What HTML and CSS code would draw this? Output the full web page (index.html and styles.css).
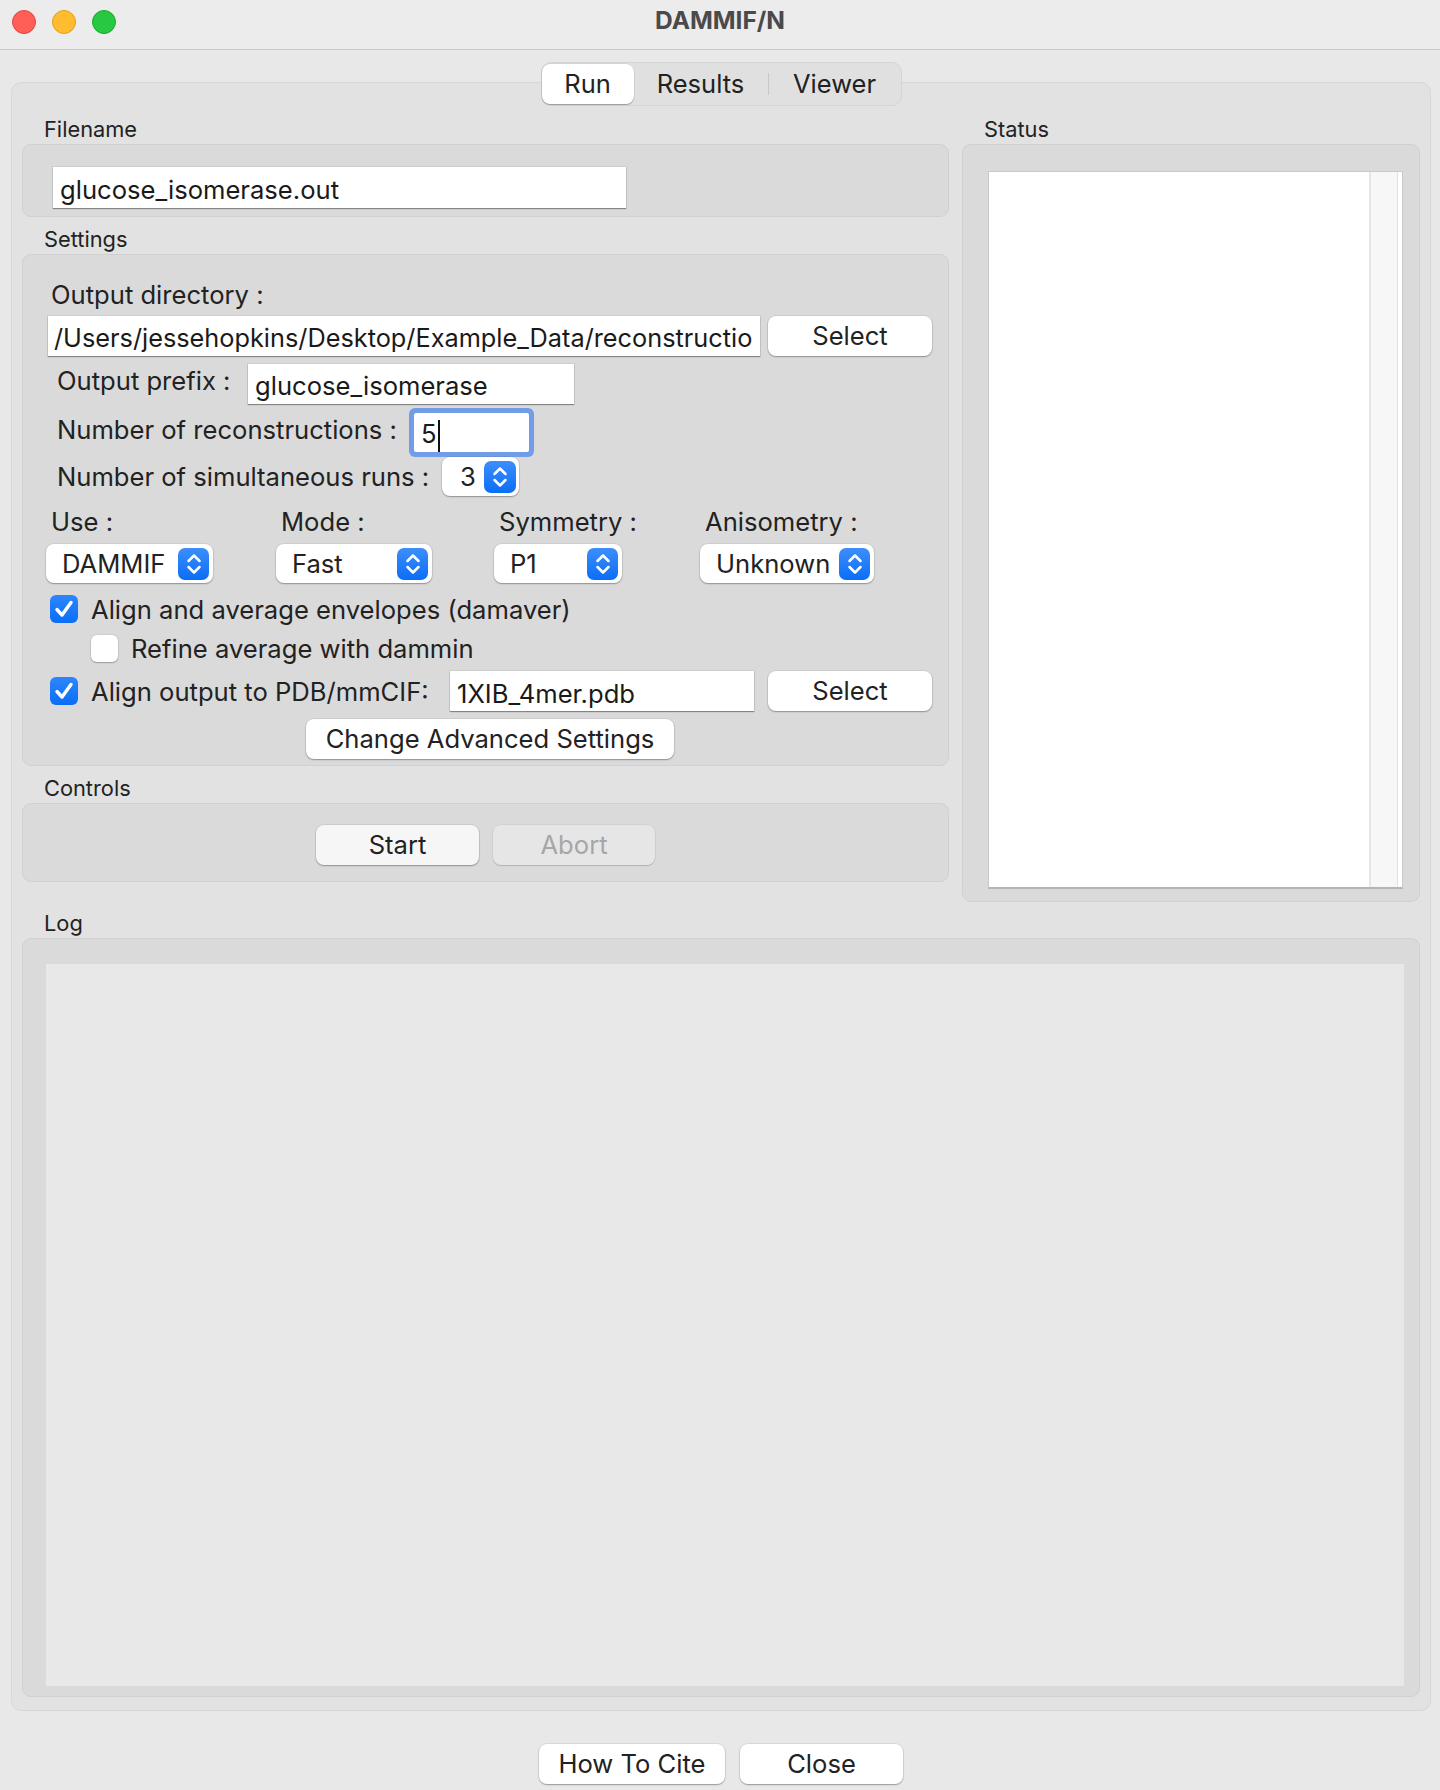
FILE: index.html
```html
<!DOCTYPE html>
<html>

<head>
  <title>DAMMIF/N</title>
  <link rel="stylesheet" href="styles.css">
</head>

<body>
  <div class="window">
    <header class="titlebar">
      <div class="lights">
        <span class="light red"></span>
        <span class="light yellow"></span>
        <span class="light green"></span>
      </div>
      <div class="title">DAMMIF/N</div>
    </header>

    <main class="content">
      <nav class="tabs">
        <span class="tab tab-run active">Run</span>
        <span class="tab tab-results">Results</span>
        <span class="tab-sep"></span>
        <span class="tab tab-viewer">Viewer</span>
      </nav>

      <section class="notebook">
        <div class="columns">
          <div class="col-left">
            <div class="group-title">Filename</div>
            <div class="group filename-group">
              <div class="field file-field">glucose_isomerase.out</div>
            </div>

            <div class="group-title">Settings</div>
            <div class="group settings">
              <div class="label dir-label">Output directory :</div>
              <div class="row dir-row">
                <div class="field dir-field">/Users/jessehopkins/Desktop/Example_Data/reconstructio</div>
                <div class="btn select-btn">Select</div>
              </div>

              <div class="row prefix-row">
                <div class="label prefix-label">Output prefix :</div>
                <div class="field prefix-field">glucose_isomerase</div>
              </div>

              <div class="row recon-row">
                <div class="label recon-label">Number of reconstructions :</div>
                <div class="field recon-field focused">5<span class="caret"></span></div>
              </div>

              <div class="row runs-row">
                <div class="label runs-label">Number of simultaneous runs :</div>
                <div class="spin">
                  <span class="spin-value">3</span>
                  <span class="stepper">
                    <svg width="18" height="28" viewBox="0 0 18 28"><path d="M3.5 11 L9 5.5 L14.5 11 M3.5 17 L9 22.5 L14.5 17" fill="none" stroke="#fff" stroke-width="2.5" stroke-linecap="round" stroke-linejoin="round"/></svg>
                  </span>
                </div>
              </div>

              <div class="row combo-labels">
                <div class="combo-col c1"><span class="label">Use :</span></div>
                <div class="combo-col c2"><span class="label">Mode :</span></div>
                <div class="combo-col c3"><span class="label">Symmetry :</span></div>
                <div class="combo-col c4"><span class="label">Anisometry :</span></div>
              </div>
              <div class="row combos">
                <div class="combo-col c1">
                  <div class="combo w-use"><span class="combo-text">DAMMIF</span>
                    <span class="stepper"><svg width="18" height="28" viewBox="0 0 18 28"><path d="M3.5 11 L9 5.5 L14.5 11 M3.5 17 L9 22.5 L14.5 17" fill="none" stroke="#fff" stroke-width="2.5" stroke-linecap="round" stroke-linejoin="round"/></svg></span>
                  </div>
                </div>
                <div class="combo-col c2">
                  <div class="combo w-mode"><span class="combo-text">Fast</span>
                    <span class="stepper"><svg width="18" height="28" viewBox="0 0 18 28"><path d="M3.5 11 L9 5.5 L14.5 11 M3.5 17 L9 22.5 L14.5 17" fill="none" stroke="#fff" stroke-width="2.5" stroke-linecap="round" stroke-linejoin="round"/></svg></span>
                  </div>
                </div>
                <div class="combo-col c3">
                  <div class="combo w-sym"><span class="combo-text">P1</span>
                    <span class="stepper"><svg width="18" height="28" viewBox="0 0 18 28"><path d="M3.5 11 L9 5.5 L14.5 11 M3.5 17 L9 22.5 L14.5 17" fill="none" stroke="#fff" stroke-width="2.5" stroke-linecap="round" stroke-linejoin="round"/></svg></span>
                  </div>
                </div>
                <div class="combo-col c4">
                  <div class="combo w-aniso"><span class="combo-text">Unknown</span>
                    <span class="stepper"><svg width="18" height="28" viewBox="0 0 18 28"><path d="M3.5 11 L9 5.5 L14.5 11 M3.5 17 L9 22.5 L14.5 17" fill="none" stroke="#fff" stroke-width="2.5" stroke-linecap="round" stroke-linejoin="round"/></svg></span>
                  </div>
                </div>
              </div>

              <div class="row check-row cb-avg">
                <span class="checkbox checked"><svg width="24" height="24" viewBox="0 0 24 24"><path d="M5 12.5 L10 18 L19 5.5" fill="none" stroke="#fff" stroke-width="3.4" stroke-linecap="round" stroke-linejoin="round"/></svg></span>
                <span class="label">Align and average envelopes (damaver)</span>
              </div>
              <div class="row check-row cb-refine">
                <span class="checkbox small"></span>
                <span class="label">Refine average with dammin</span>
              </div>
              <div class="row check-row cb-pdb">
                <span class="checkbox checked"><svg width="24" height="24" viewBox="0 0 24 24"><path d="M5 12.5 L10 18 L19 5.5" fill="none" stroke="#fff" stroke-width="3.4" stroke-linecap="round" stroke-linejoin="round"/></svg></span>
                <span class="label pdb-label">Align output to PDB/mmCIF:</span>
                <div class="field pdb-field">1XIB_4mer.pdb</div>
                <div class="btn select-btn">Select</div>
              </div>

              <div class="btn advanced-btn">Change Advanced Settings</div>
            </div>

            <div class="group-title">Controls</div>
            <div class="group controls">
              <div class="btn start-btn">Start</div>
              <div class="btn abort-btn">Abort</div>
            </div>
          </div>

          <div class="col-right">
            <div class="group-title">Status</div>
            <div class="group status-group">
              <div class="status-box">
                <div class="status-text"></div>
                <div class="scrollbar"></div>
              </div>
            </div>
          </div>
        </div>

        <div class="group-title">Log</div>
        <div class="group log-group">
          <div class="log-area"></div>
        </div>
      </section>

      <footer class="footer">
        <div class="btn cite-btn">How To Cite</div>
        <div class="btn close-btn">Close</div>
      </footer>
    </main>
  </div>
</body>

</html>
```

FILE: styles.css
```css
html,
body {
  margin: 0;
  padding: 0;
}

body {
  width: 1440px;
  height: 1790px;
  overflow: hidden;
  background-color: #e8e8e8;
  font-family: Inter, "Liberation Sans", sans-serif;
  color: #222;
}

.window {
  height: 100%;
  display: flex;
  flex-direction: column;
}

/* title bar */
.titlebar {
  height: 49px;
  flex: none;
  position: relative;
  background-color: #ececec;
  border-bottom: 1px solid #cacaca;
}

.lights {
  position: absolute;
  top: 10px;
  left: 12px;
  display: flex;
  gap: 16px;
}

.light {
  width: 24px;
  height: 24px;
  border-radius: 50%;
  box-sizing: border-box;
}

.red {
  background-color: #ff5f57;
  border: 1px solid #e2463f;
}

.yellow {
  background-color: #febc2e;
  border: 1px solid #e1a116;
}

.green {
  background-color: #28c840;
  border: 1px solid #14ae2b;
}

.title {
  text-align: center;
  font-weight: 700;
  font-size: 24.5px;
  line-height: 28px;
  padding-top: 6px;
  color: #4a4a4a;
}

.content {
  flex: 1;
  display: flex;
  flex-direction: column;
}

/* segmented tab bar */
.tabs {
  position: relative;
  z-index: 1;
  align-self: center;
  margin: 12px 0 -24px 2px;
  height: 42px;
  width: 359px;
  display: flex;
  align-items: center;
  background-color: #e0e0e0;
  border: 1px solid #d4d4d4;
  border-radius: 10px;
  font-size: 25.5px;
  color: #222;
}

.tab {
  height: 40px;
  line-height: 40px;
  text-align: center;
}

.tab-run {
  width: 92px;
}

.tab-results {
  width: 134px;
}

.tab-viewer {
  flex: 1;
}

.tab.active {
  background-color: #fff;
  border-radius: 8px;
  box-shadow: 0 1px 1px rgba(0, 0, 0, 0.28), 0 0 0 0.5px rgba(0, 0, 0, 0.1);
}

.tab-sep {
  width: 1px;
  height: 22px;
  background-color: #c8c8c8;
}

/* notebook page */
.notebook {
  margin: 0 9px 0 11px;
  height: 1629px;
  box-sizing: border-box;
  padding: 33px 10px 13px 10px;
  background-color: #e2e2e2;
  border: 1px solid #d7d7d7;
  border-radius: 10px;
  display: flex;
  flex-direction: column;
}

.columns {
  display: grid;
  grid-template-columns: 927px 458px;
  column-gap: 13px;
  margin-bottom: 8px;
}

.group-title {
  height: 27px;
  line-height: 27px;
  font-size: 21.8px;
  padding-left: 22px;
  margin-bottom: 1px;
  color: #222;
}

.group {
  box-sizing: border-box;
  background-color: #dadada;
  border: 1px solid #d0d0d0;
  border-radius: 9px;
  margin-bottom: 9px;
}

.label {
  font-size: 25.6px;
  line-height: 32px;
  white-space: nowrap;
}

.row {
  display: flex;
}

.field {
  box-sizing: border-box;
  height: 40px;
  line-height: 40px;
  padding: 1px 7px 0 7px;
  background-color: #fff;
  font-size: 25.6px;
  color: #1a1a1a;
  white-space: nowrap;
  overflow: hidden;
  box-shadow: 0 0 0 1px rgba(0, 0, 0, 0.06), 0 1px 1px rgba(0, 0, 0, 0.35);
}

.btn {
  box-sizing: border-box;
  height: 40px;
  line-height: 40px;
  text-align: center;
  font-size: 25.6px;
  color: #222;
  background-color: #fff;
  border-radius: 8px;
  box-shadow: 0 0 0 1px rgba(0, 0, 0, 0.06), 0 1px 1.5px rgba(0, 0, 0, 0.3);
}

/* filename */
.filename-group {
  height: 73px;
  padding: 22px 0 0 30px;
}

.file-field {
  width: 573px;
  height: 41px;
  line-height: 43px;
}

/* settings */
.settings {
  padding-bottom: 6px;
}

.dir-label {
  margin: 24px 0 0 28px;
}

.dir-row {
  margin: 5px 0 0 25px;
  gap: 8px;
}

.dir-field {
  width: 712px;
  padding: 2px 0 0 6px;
  font-size: 25.3px;
}

.select-btn {
  width: 164px;
}

.prefix-row {
  margin: 8px 0 0 34px;
}

.prefix-label {
  width: 191px;
  margin-top: 1px;
}

.prefix-field {
  width: 326px;
  padding-top: 2px;
}

.recon-row {
  margin: 9px 0 0 34px;
}

.recon-label {
  width: 357px;
  margin-top: 1px;
}

.recon-field {
  width: 115px;
  height: 39px;
  line-height: 39px;
}

.focused {
  border-radius: 2px;
  box-shadow: 0 0 0 5px #719de6;
}

.caret {
  display: inline-block;
  width: 2px;
  height: 33px;
  margin-left: 1px;
  vertical-align: middle;
  background-color: #111;
}

.runs-row {
  margin: 5px 0 0 34px;
}

.runs-label {
  width: 385px;
  margin-top: 4px;
}

.spin {
  box-sizing: border-box;
  width: 77px;
  height: 39px;
  display: flex;
  align-items: center;
  justify-content: space-between;
  padding: 0 3px 0 18px;
  background-color: #fff;
  border-radius: 8px;
  font-size: 25.6px;
  box-shadow: 0 0 0 1px rgba(0, 0, 0, 0.05), 0 1px 1.5px rgba(0, 0, 0, 0.3);
}

.stepper {
  width: 32px;
  height: 32px;
  border-radius: 7px;
  background: linear-gradient(#3d8efc, #0a6ef6);
  display: flex;
  align-items: center;
  justify-content: center;
}

.combo-labels {
  margin: 10px 0 0 23px;
}

.combo-labels .combo-col {
  padding-left: 5px;
  box-sizing: border-box;
}

.combos {
  margin: 6px 0 0 23px;
}

.combo-col.c1 {
  width: 230px;
}

.combo-col.c2 {
  width: 218px;
}

.combo-col.c3 {
  width: 206px;
}

.combo {
  box-sizing: border-box;
  height: 39px;
  display: flex;
  align-items: center;
  justify-content: space-between;
  padding: 0 4px 0 16px;
  background-color: #fff;
  border-radius: 8px;
  font-size: 25.6px;
  box-shadow: 0 0 0 1px rgba(0, 0, 0, 0.05), 0 1px 1.5px rgba(0, 0, 0, 0.3);
}

.combo .stepper {
  width: 31px;
}

.w-use {
  width: 167px;
}

.w-mode {
  width: 156px;
}

.w-sym {
  width: 128px;
}

.w-aniso {
  width: 174px;
}

.check-row {
  align-items: center;
}

.check-row .label {
  line-height: 30px;
  padding-top: 2px;
}

.checkbox {
  box-sizing: border-box;
  width: 28px;
  height: 28px;
  margin-right: 13px;
  border-radius: 6px;
  background-color: #fff;
  display: flex;
  align-items: center;
  justify-content: center;
  box-shadow: 0 0 0 1px rgba(0, 0, 0, 0.05), 0 1px 1.5px rgba(0, 0, 0, 0.25);
}

.checkbox.checked {
  background: linear-gradient(#2d86fd, #0a6ef6);
  box-shadow: none;
}

.checkbox.small {
  width: 27px;
  height: 27px;
}

.cb-avg {
  margin: 10px 0 0 27px;
}

.cb-refine {
  margin: 7px 0 0 68px;
}

.cb-pdb {
  margin: 7px 0 0 27px;
  height: 40px;
}

.pdb-label {
  width: 359px;
}

.pdb-field {
  width: 304px;
  margin-right: 14px;
  padding-top: 3px;
}

.advanced-btn {
  width: 368px;
  margin: 8px 0 0 283px;
}

/* controls */
.controls {
  height: 79px;
  padding-top: 21px;
  display: flex;
  justify-content: center;
  gap: 14px;
  margin-bottom: 0;
}

.start-btn {
  width: 163px;
  background-color: #f6f6f6;
}

.abort-btn {
  width: 162px;
  background-color: #e6e6e6;
  color: #a6a6a6;
  box-shadow: 0 0 0 1px rgba(0, 0, 0, 0.04), 0 1px 1px rgba(0, 0, 0, 0.15);
}

/* status panel */
.status-group {
  height: 758px;
  padding: 26px 16px 12px 25px;
  margin-bottom: 0;
}

.status-box {
  height: 100%;
  box-sizing: border-box;
  display: flex;
  background-color: #fff;
  border: 1px solid #c9c9c9;
  border-bottom: 2px solid #b4b4b4;
  padding: 0 4px 0 0;
}

.status-text {
  flex: 1;
}

.scrollbar {
  width: 26px;
  background-color: #f7f7f7;
  border-left: 2px solid #e6e6e6;
  border-right: 1px solid #e2e2e2;
}

/* log */
.log-group {
  flex: 1;
  margin-bottom: 0;
  padding: 25px 15px 10px 23px;
}

.log-area {
  height: 100%;
  background-color: #e8e8e8;
}

/* bottom buttons */
.footer {
  margin-top: 33px;
  display: flex;
  justify-content: center;
  gap: 15px;
  padding-left: 2px;
}

.cite-btn {
  width: 186px;
}

.close-btn {
  width: 163px;
}
```
